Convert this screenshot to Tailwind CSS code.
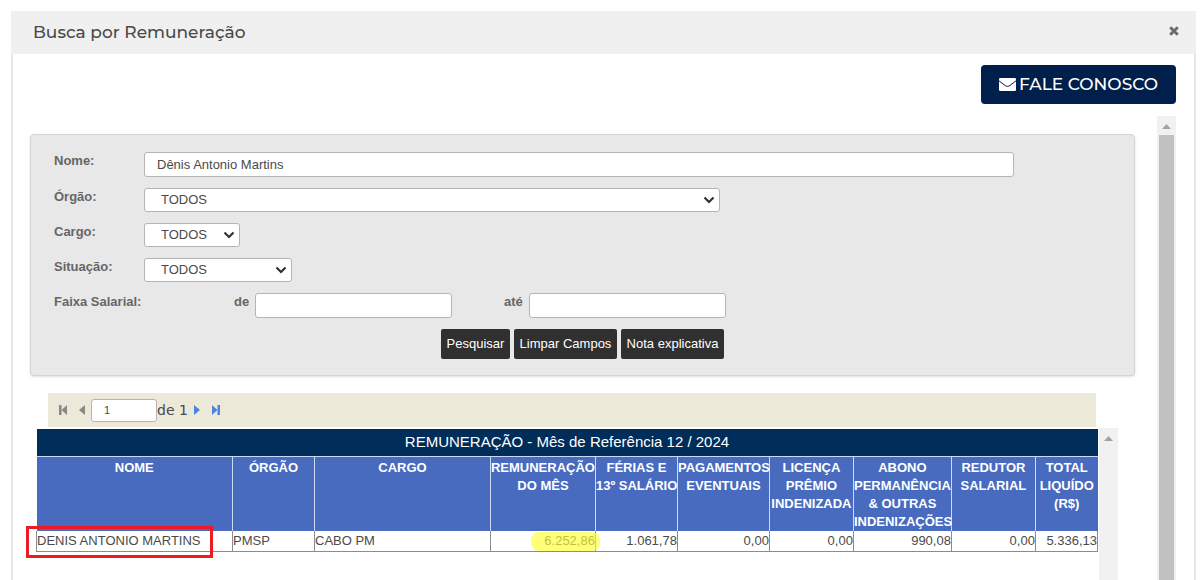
<!DOCTYPE html>
<html lang="pt-BR">
<head>
<meta charset="utf-8">
<title>Busca por Remuneração</title>
<script src="https://cdn.jsdelivr.net/npm/@tailwindcss/browser@4"></script>
</head>
<body class="h-screen overflow-hidden bg-white pt-[11px] pr-1 pl-[11px] font-['Liberation_Sans',Arial,sans-serif] text-[13px] text-[#4a4a4a]">
<main class="flex h-full flex-col">
  <header class="flex h-[43px] shrink-0 items-center justify-between bg-[#f0f0f0] pr-[17px] pl-[22px]">
    <h1 class="font-['Montserrat',Inter,sans-serif] text-[17px] font-medium">Busca por Remuneração</h1>
    <button type="button" aria-label="Fechar" class="mb-1">
      <svg class="size-[10px]" viewBox="0 0 10 10" fill="none" stroke="#6d6d6d" stroke-width="3"><path d="M1.2 1.2l7.6 7.6M8.800 1.200l-7.600 7.600"/></svg>
    </button>
  </header>

  <div class="flex min-h-0 flex-1 flex-col border-x-2 border-[#e6e6e6] pt-[11px] pr-[18px] pl-[17px]">
    <a href="#contato" class="flex h-[39px] shrink-0 items-center gap-[3px] self-end rounded bg-[#00204b] px-[18px] font-['Montserrat',Inter,sans-serif] text-[17px] font-medium text-white">
      <svg class="h-[13px] w-[17px]" viewBox="0 0 17 13"><rect width="17" height="13" rx="1.200" fill="#fff"/><path d="M0 2.800l6.300 4.900q2.200 1.500 4.400 0L17 2.800" fill="none" stroke="#00204b" stroke-width="1"/></svg>
      FALE CONOSCO
    </a>

    <div class="mt-3 flex min-h-0 flex-1 justify-between">
      <div class="mr-[22px] flex min-w-0 flex-1 flex-col pt-[18px]">
        <form class="flex h-[242px] shrink-0 flex-col gap-[11px] rounded border border-[#d4d4d4] bg-[#e8e8e8] pt-[17px] pl-[23px] font-normal shadow-sm">
          <div class="flex items-start">
            <label for="nome" class="w-[90px] shrink-0 leading-[18px] font-bold text-[#666]">Nome:</label>
            <input id="nome" type="text" value="Dênis Antonio Martins" class="mr-[120px] h-[25px] min-w-0 flex-1 rounded-[3px] border border-[#b5b5b5] bg-white px-3 text-[13px]">
          </div>
          <div class="flex items-start">
            <label for="orgao" class="w-[90px] shrink-0 leading-[18px] font-bold text-[#666]">Órgão:</label>
            <div class="relative w-[576px]">
              <select id="orgao" class="block h-6 w-full appearance-none rounded-[3px] border border-[#b5b5b5] bg-white pl-4 text-[13px]"><option>TODOS</option></select>
              <svg class="pointer-events-none absolute top-2 right-[5px] h-2 w-3" viewBox="0 0 12 8" fill="none" stroke="#333" stroke-width="2.200"><path d="M1.500 1.500L6 6l4.500-4.500"/></svg>
            </div>
          </div>
          <div class="flex items-start">
            <label for="cargo" class="w-[90px] shrink-0 leading-[18px] font-bold text-[#666]">Cargo:</label>
            <div class="relative w-24">
              <select id="cargo" class="block h-6 w-full appearance-none rounded-[3px] border border-[#b5b5b5] bg-white pl-4 text-[13px]"><option>TODOS</option></select>
              <svg class="pointer-events-none absolute top-2 right-[5px] h-2 w-3" viewBox="0 0 12 8" fill="none" stroke="#333" stroke-width="2.200"><path d="M1.500 1.500L6 6l4.500-4.500"/></svg>
            </div>
          </div>
          <div class="flex items-start">
            <label for="situacao" class="w-[90px] shrink-0 leading-[18px] font-bold text-[#666]">Situação:</label>
            <div class="relative w-[148px]">
              <select id="situacao" class="block h-6 w-full appearance-none rounded-[3px] border border-[#b5b5b5] bg-white pl-4 text-[13px]"><option>TODOS</option></select>
              <svg class="pointer-events-none absolute top-2 right-[5px] h-2 w-3" viewBox="0 0 12 8" fill="none" stroke="#333" stroke-width="2.200"><path d="M1.500 1.500L6 6l4.500-4.500"/></svg>
            </div>
          </div>
          <div class="flex items-start leading-[18px] font-bold text-[#666]">
            <span class="w-[180px] shrink-0">Faixa Salarial:</span>
            <label for="de" class="w-[21px]">de</label>
            <input id="de" type="text" class="h-[25px] w-[197px] rounded-[3px] border border-[#b5b5b5] bg-white px-3 font-normal">
            <label for="ate" class="ml-[52px] w-[25px]">até</label>
            <input id="ate" type="text" class="h-[25px] w-[197px] rounded-[3px] border border-[#b5b5b5] bg-white px-3 font-normal">
          </div>
          <div class="flex gap-1 pl-[387px] text-[13px] text-white">
            <button type="submit" class="h-[30px] w-[69px] rounded-[2px] bg-[#303030]">Pesquisar</button>
            <button type="reset" class="h-[30px] w-[103px] rounded-[2px] bg-[#303030]">Limpar Campos</button>
            <button type="button" class="h-[30px] w-[103px] rounded-[2px] bg-[#303030]">Nota explicativa</button>
          </div>
        </form>

        <nav aria-label="Paginação" class="mt-[17px] mr-[39px] ml-[18px] flex h-[34px] shrink-0 items-center bg-[#ece9d8] pl-[10px]">
          <button type="button" aria-label="Primeira página"><svg class="h-[10px] w-[10px]" viewBox="0 0 10 10" fill="#888"><path d="M1 0h2.500v10H1zM9 0v10L3.500 5z"/></svg></button>
          <button type="button" aria-label="Página anterior" class="ml-[11px]"><svg class="h-[10px] w-[7px]" viewBox="0 0 7 10" fill="#888"><path d="M6 0v10L0 5z"/></svg></button>
          <input type="text" value="1" aria-label="Página" class="ml-[5px] h-[23px] w-[66px] rounded-[3px] border border-[#b5b5b5] bg-white px-3 text-[11px]">
          <span class="font-['DejaVu_Sans',Verdana,sans-serif] text-[14px]">de 1</span>
          <button type="button" aria-label="Próxima página" class="ml-[6px]"><svg class="h-[10px] w-[7px]" viewBox="0 0 7 10" fill="#4a84e0"><path d="M0 0v10l6-5z"/></svg></button>
          <button type="button" aria-label="Última página" class="ml-[10px]"><svg class="h-[10px] w-[10px]" viewBox="0 0 10 10" fill="#4a84e0"><path d="M9 0H6.500v10H9zM1 0v10l5.500-5z"/></svg></button>
        </nav>

        <div class="mt-px mr-[17px] ml-[6px] flex min-h-0 flex-1">
          <div class="min-w-0 flex-1 pt-px pr-px">
            <table class="w-full table-fixed border-collapse whitespace-nowrap">
              <colgroup>
                <col class="w-[196px]"><col class="w-[82px]"><col><col class="w-[105px]"><col class="w-[82px]"><col class="w-[92px]"><col class="w-[84px]"><col class="w-[98px]"><col class="w-[84px]"><col class="w-[62px]">
              </colgroup>
              <thead class="text-white">
                <tr class="h-[27px] bg-[#002d5a]"><th colspan="10" scope="colgroup" class="border-b border-[#cdd9f5] p-0 text-[15px] font-normal">REMUNERAÇÃO - Mês de Referência 12 / 2024</th></tr>
                <tr class="h-[75px] bg-[#486bc0] align-top leading-[18px]">
                  <th scope="col" class="p-0 pt-[2px]">NOME</th>
                  <th scope="col" class="border-l border-[#cdd9f5] p-0 pt-[2px]">ÓRGÃO</th>
                  <th scope="col" class="border-l border-[#cdd9f5] p-0 pt-[2px]">CARGO</th>
                  <th scope="col" class="border-l border-[#cdd9f5] p-0 pt-[2px]">REMUNERAÇÃO<br>DO MÊS</th>
                  <th scope="col" class="border-l border-[#cdd9f5] p-0 pt-[2px]">FÉRIAS E<br>13º SALÁRIO</th>
                  <th scope="col" class="border-l border-[#cdd9f5] p-0 pt-[2px]">PAGAMENTOS<br>EVENTUAIS</th>
                  <th scope="col" class="border-l border-[#cdd9f5] p-0 pt-[2px]">LICENÇA<br>PRÊMIO<br>INDENIZADA</th>
                  <th scope="col" class="border-l border-[#cdd9f5] p-0 pt-[2px]">ABONO<br>PERMANÊNCIA<br>&amp; OUTRAS<br>INDENIZAÇÕES</th>
                  <th scope="col" class="border-l border-[#cdd9f5] p-0 pt-[2px]">REDUTOR<br>SALARIAL</th>
                  <th scope="col" class="border-l border-[#cdd9f5] p-0 pt-[2px]">TOTAL<br>LIQUÍDO<br>(R$)</th>
                </tr>
              </thead>
              <tbody>
                <tr class="h-5 text-right leading-[18px]">
                  <td class="relative border-x border-b border-[#8c8c8c] p-0 pt-px text-left">DENIS ANTONIO MARTINS<span class="absolute -top-[5px] -left-[11px] h-8 w-[187px] border-3 border-[#ed1c24]"></span></td>
                  <td class="border-x border-b border-[#8c8c8c] p-0 pt-px text-left">PMSP</td>
                  <td class="border-x border-b border-[#8c8c8c] p-0 pt-px text-left">CABO PM</td>
                  <td class="relative border-x border-b border-[#8c8c8c] p-0 pt-px">6.252,86<span class="absolute top-px -right-[5px] h-[19px] w-[69px] rounded-lg bg-[#ffff33]/65"></span></td>
                  <td class="border-x border-b border-[#8c8c8c] p-0 pt-px">1.061,78</td>
                  <td class="border-x border-b border-[#8c8c8c] p-0 pt-px">0,00</td>
                  <td class="border-x border-b border-[#8c8c8c] p-0 pt-px">0,00</td>
                  <td class="border-x border-b border-[#8c8c8c] p-0 pt-px">990,08</td>
                  <td class="border-x border-b border-[#8c8c8c] p-0 pt-px">0,00</td>
                  <td class="border-x border-b border-[#8c8c8c] p-0 pt-px">5.336,13</td>
                </tr>
              </tbody>
            </table>
          </div>
          <div class="flex w-[19px] shrink-0 justify-center bg-[#f1f1f1] pt-2">
            <svg class="h-[5px] w-[9px]" viewBox="0 0 9 5" fill="#a3a3a3"><path d="M4.500 0L9 5H0z"/></svg>
          </div>
        </div>
      </div>

      <div class="flex w-[19px] shrink-0 flex-col items-center bg-[#f1f1f1] pt-2">
        <svg class="mb-[6px] h-[5px] w-[9px] shrink-0" viewBox="0 0 9 5" fill="#a3a3a3"><path d="M4.500 0L9 5H0z"/></svg>
        <div class="w-[15px] flex-1 bg-[#c1c1c1]"></div>
      </div>
    </div>
  </div>
</main>
</body>
</html>
